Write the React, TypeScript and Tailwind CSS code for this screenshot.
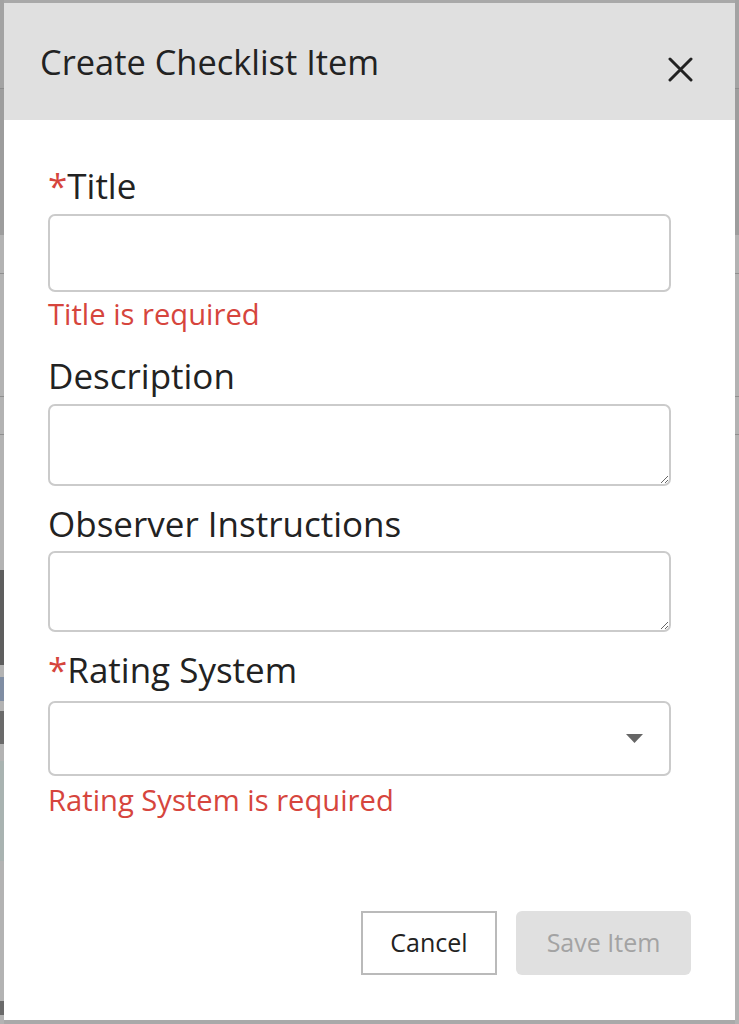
import React from "react";

function Field({
  label,
  required,
  className,
  children,
}: {
  label: string;
  required?: boolean;
  className?: string;
  children: React.ReactNode;
}) {
  return (
    <div className={className}>
      <label className="block text-[35px] leading-[44px] text-[#222]">
        {required && <span className="text-[#d6453d]">*</span>}
        {label}
      </label>
      {children}
    </div>
  );
}

function ErrorText({ children, className }: { children: React.ReactNode; className?: string }) {
  return <p className={"text-[29.2px] leading-[36px] text-[#d6453d] " + (className ?? "")}>{children}</p>;
}

function Edge() {
  // strip of the dimmed page that shows behind the dialog
  return (
    <div className="flex w-[4px] flex-col">
      <div className="h-[88px] bg-[#a3a3a3]" />
      <div className="h-[1px] bg-[#8c8c8c]" />
      <div className="h-[146px] bg-[#9d9d9d]" />
      <div className="h-[38px] bg-[#b3b3b3]" />
      <div className="h-[1px] bg-[#8f8f8f]" />
      <div className="h-[122px] bg-[#b3b3b3]" />
      <div className="h-[1px] bg-[#8f8f8f]" />
      <div className="h-[37px] bg-[#b3b3b3]" />
      <div className="h-[1px] bg-[#8f8f8f]" />
      <div className="flex-1 bg-[#b3b3b3]" />
    </div>
  );
}

function LeftEdge() {
  return (
    <div className="flex w-[4px] flex-col">
      <div className="h-[88px] bg-[#a3a3a3]" />
      <div className="h-[1px] bg-[#8c8c8c]" />
      <div className="h-[146px] bg-[#9d9d9d]" />
      <div className="h-[38px] bg-[#b3b3b3]" />
      <div className="h-[1px] bg-[#8f8f8f]" />
      <div className="h-[122px] bg-[#b3b3b3]" />
      <div className="h-[1px] bg-[#8f8f8f]" />
      <div className="h-[37px] bg-[#b3b3b3]" />
      <div className="h-[1px] bg-[#8f8f8f]" />
      <div className="h-[135px] bg-[#b3b3b3]" />
      <div className="h-[95px] bg-[#5e5e5e]" />
      <div className="h-[12px] bg-[#b3b3b3]" />
      <div className="h-[24px] bg-[#7f8da3]" />
      <div className="h-[10px] bg-[#b3b3b3]" />
      <div className="h-[33px] bg-[#6a6a6a]" />
      <div className="h-[17px] bg-[#b3b3b3]" />
      <div className="h-[100px] bg-[#a9b3b1]" />
      <div className="h-[140px] bg-[#b3b3b3]" />
      <div className="h-[14px] bg-[#6a6a6a]" />
      <div className="flex-1 bg-[#b3b3b3]" />
    </div>
  );
}

export default function App() {
  return (
    <div
      className="flex h-[1024px] w-[739px] bg-[#b3b3b3]"
      style={{ fontFamily: '"Open Sans", "Noto Sans", sans-serif' }}
    >
      <LeftEdge />
      <div className="flex flex-1 flex-col">
        <div className="h-[3px] bg-[#a9a9a9]" />
        <div className="flex flex-1 flex-col bg-white">
          {/* Header */}
          <div className="flex h-[117px] items-center justify-between bg-[#e0e0e0] pl-[36px] pr-[42px]">
            <h2 className="text-[34.4px] leading-[44px] text-[#222]">Create Checklist Item</h2>
            <button className="mt-[16px] text-[#222]">
              <svg width="25" height="25" viewBox="0 0 25 25" fill="none" stroke="currentColor" strokeWidth="3" strokeLinecap="round">
                <path d="M2 2 23 23M23 2 2 23" />
              </svg>
            </button>
          </div>

          {/* Body */}
          <div className="flex flex-1 flex-col px-[44px] pt-[44px] pb-[45px]">
            <Field label="Title" required>
              <input className="mt-[6px] block h-[78px] w-[623px] rounded-[7px] border-2 border-[#cbcbcb] bg-white px-3 text-[28px] outline-none" />
            </Field>
            <ErrorText className="mt-[4px]">Title is required</ErrorText>

            <Field label="Description" className="mt-[22px]">
              <textarea className="mt-[6px] block h-[82px] w-[623px] rounded-[7px] border-2 border-[#cbcbcb] bg-white px-3 text-[28px] outline-none" />
            </Field>

            <Field label="Observer Instructions" className="mt-[16px]">
              <textarea className="mt-[5px] block h-[81px] w-[623px] rounded-[7px] border-2 border-[#cbcbcb] bg-white px-3 text-[28px] outline-none" />
            </Field>

            <Field label="Rating System" required className="mt-[16px]">
              <div className="mt-[9px] flex h-[75px] w-[623px] items-center justify-end rounded-[7px] border-2 border-[#cbcbcb] bg-white pr-[26px]">
                <svg width="17" height="9" viewBox="0 0 17 9">
                  <path d="M0 0h17L8.5 9z" fill="#666" />
                </svg>
              </div>
            </Field>
            <ErrorText className="mt-[6px]">Rating System is required</ErrorText>

            {/* Footer */}
            <div className="mt-auto flex justify-end gap-[19px]">
              <button className="h-[64px] w-[136px] border-2 border-[#bababa] bg-white text-[25px] text-[#222]">
                Cancel
              </button>
              <button className="h-[64px] w-[175px] rounded-[6px] bg-[#e0e0e0] text-[25px] text-[#a3a3a3]" disabled>
                Save Item
              </button>
            </div>
          </div>
        </div>
        <div className="h-[4px] bg-[#a9a9a9]" />
      </div>
      <Edge />
    </div>
  );
}
